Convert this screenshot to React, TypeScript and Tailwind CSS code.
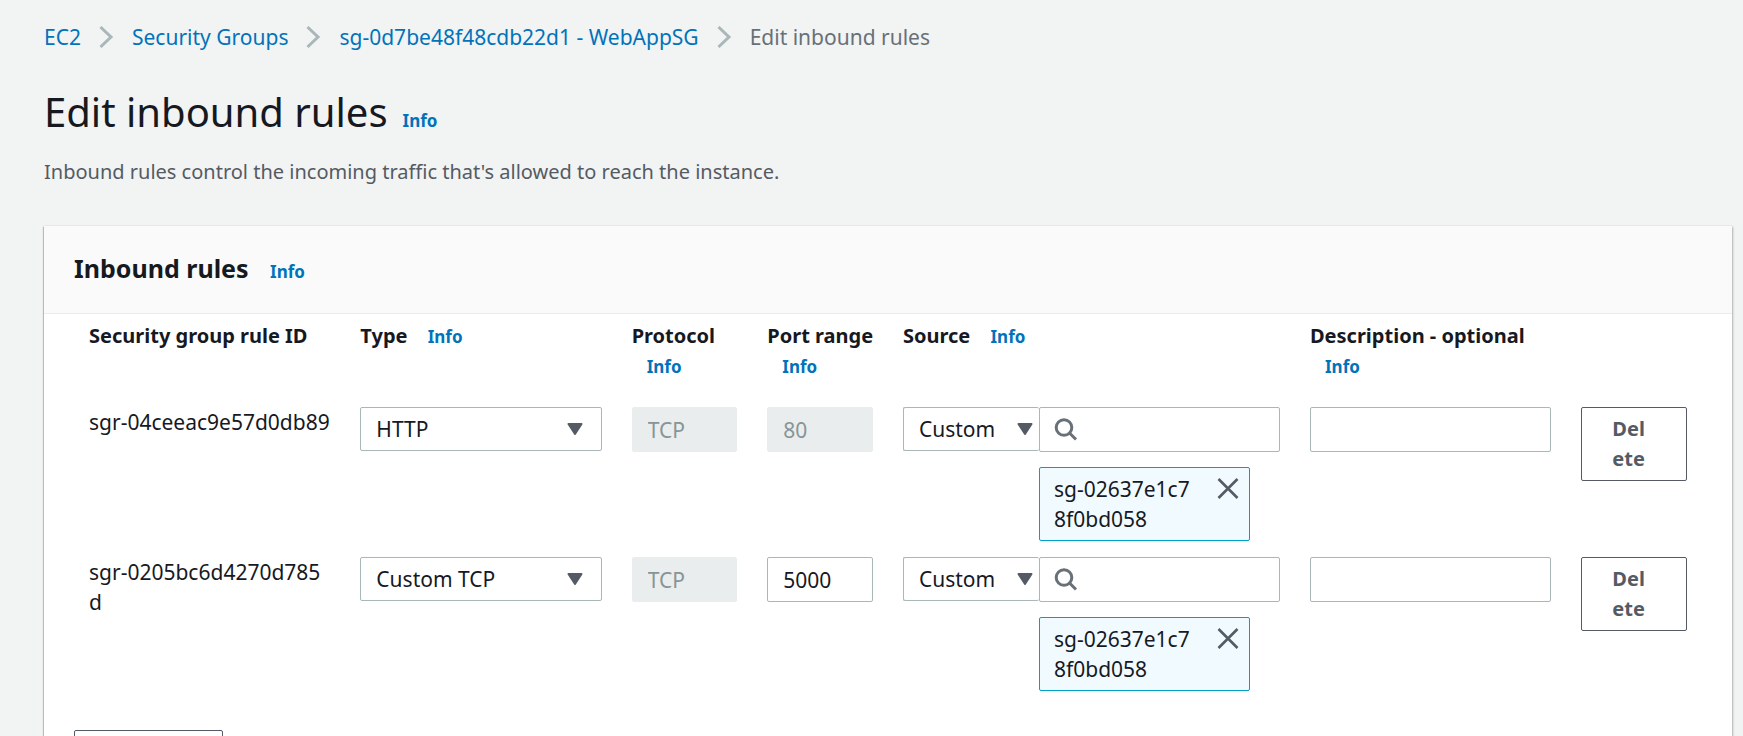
import { useState } from 'react';

type Rule = {
  id: string;
  type: string;
  port: string;
  portLocked: boolean;
  group: string;
};

const rules: Rule[] = [
  {
    id: 'sgr-04ceeac9e57d0db89',
    type: 'HTTP',
    port: '80',
    portLocked: true,
    group: 'sg-02637e1c78f0bd058',
  },
  {
    id: 'sgr-0205bc6d4270d785d',
    type: 'Custom TCP',
    port: '5000',
    portLocked: false,
    group: 'sg-02637e1c78f0bd058',
  },
];

const crumbs = ['EC2', 'Security Groups', 'sg-0d7be48f48cdb22d1 - WebAppSG'];

const columns = [
  { label: 'Security group rule ID', width: 'w-2/12', info: false },
  { label: 'Type', width: 'w-2/12', info: true },
  { label: 'Protocol', width: 'w-1/12', info: true },
  { label: 'Port range', width: 'w-1/12', info: true },
  { label: 'Source', width: 'w-3/12', info: true },
  { label: 'Description - optional', width: 'w-2/12', info: true },
];

export default function App() {
  return (
    <main className="min-h-screen bg-[#f2f3f3] pt-[22px] pr-[11px] pb-8 pl-11 font-['Noto_Sans',sans-serif] text-[21px] leading-[30px] text-[#16191f]">
      <Breadcrumbs />
      <header className="mt-[30px]">
        <h1 className="text-[40px] leading-[60px]">
          Edit inbound rules
          <InfoLink />
        </h1>
        <p className="mt-[15px] text-[20px] text-[#545b64]">
          Inbound rules control the incoming traffic that's allowed to reach the
          instance.
        </p>
      </header>
      <section className="mt-[39px] bg-white shadow-[0_0_1px_0_#00000030,1px_1px_2px_0_#00000040,-1px_1px_1px_0_#00000030]">
        <div className="border-b border-[#eaeded] bg-[#fafafa] px-[30px] pt-[23px] pb-[26px]">
          <h2 className="text-[25px] leading-[38px] font-bold">
            Inbound rules <InfoLink />
          </h2>
        </div>
        <div className="px-[30px] pt-[7px] pb-[30px]">
          <RulesTable />
          <button
            className="mt-[23px] h-[45px] w-[149px] rounded-[2px] border border-[#545b64] text-[20px] font-bold text-[#545b64]"
            type="button"
          >
            Add rule
          </button>
        </div>
      </section>
    </main>
  );
}

function Breadcrumbs() {
  return (
    <nav aria-label="Breadcrumbs">
      <ol className="flex items-center">
        {crumbs.map((crumb) => (
          <li className="flex items-center" key={crumb}>
            <a className="text-[#0073bb]" href="#">
              {crumb}
            </a>
            <svg
              aria-hidden="true"
              className="mx-[18px] h-6 w-[15px] text-[#aab7b8]"
              fill="none"
              stroke="currentColor"
              strokeWidth="3"
              viewBox="0 0 15 24"
            >
              <path d="M1.5 2 12 12 1.5 22" />
            </svg>
          </li>
        ))}
        <li className="text-[#687078]">Edit inbound rules</li>
      </ol>
    </nav>
  );
}

function InfoLink() {
  return (
    <a
      className="ml-[15px] inline-block text-[17px] leading-[20px] font-bold text-[#0073bb]"
      href="#"
    >
      Info
    </a>
  );
}

function RulesTable() {
  return (
    <table className="w-full table-fixed">
      <thead>
        <tr>
          {columns.map(({ label, width, info }) => (
            <th
              className={`px-[15px] pb-[26px] text-left align-top text-[20px] font-bold ${width}`}
              key={label}
              scope="col"
            >
              <span className="whitespace-nowrap">{label}</span>{' '}
              {info ? <InfoLink /> : null}
            </th>
          ))}
          <td className="w-1/12" />
        </tr>
      </thead>
      <tbody>
        {rules.map((rule) => (
          <RuleRow key={rule.id} rule={rule} />
        ))}
      </tbody>
    </table>
  );
}

function RuleRow({ rule }: { rule: Rule }) {
  const [port, setPort] = useState(rule.port);
  const cell = 'px-[15px] pb-4 align-top';

  return (
    <tr>
      <td className={`${cell} break-all`}>{rule.id}</td>
      <td className={cell}>
        <Select label="Type" value={rule.type} />
      </td>
      <td className={cell}>
        <TextField disabled label="Protocol" value="TCP" />
      </td>
      <td className={cell}>
        <TextField
          disabled={rule.portLocked}
          label="Port range"
          onChange={setPort}
          value={port}
        />
      </td>
      <td className={cell}>
        <div className="grid grid-cols-[136px_1fr] items-start">
          <Select joined label="Source type" value="Custom" />
          <div>
            <div className="relative">
              <SearchIcon />
              <input
                aria-label="Source"
                className="block h-[45px] w-full rounded-[2px] border border-[#aab7b8] bg-white pr-4 pl-12"
                type="search"
              />
            </div>
            <div className="mt-[15px] mr-[30px] flex items-start rounded-[2px] border border-[#00a1c9] bg-[#f1faff] py-[6px] pr-[6px] pl-[14px]">
              <span className="w-[138px] break-all">{rule.group}</span>
              <button
                aria-label={`Remove ${rule.group}`}
                className="ml-auto text-[#545b64]"
                type="button"
              >
                <CloseIcon />
              </button>
            </div>
          </div>
        </div>
      </td>
      <td className={cell}>
        <TextField label="Description" />
      </td>
      <td className={cell}>
        <button
          className="block w-full rounded-[2px] border border-[#545b64] bg-white px-[30px] py-[6px] text-left text-[20px] font-bold break-all text-[#545b64]"
          type="button"
        >
          Delete
        </button>
      </td>
    </tr>
  );
}

function SearchIcon() {
  return (
    <svg
      aria-hidden="true"
      className="absolute top-[10px] left-[15px] size-6 text-[#687078]"
      fill="none"
      stroke="currentColor"
      strokeWidth="3"
      viewBox="0 0 24 24"
    >
      <circle cx="10" cy="10.5" r="7.8" />
      <path d="m15.5 16 6.5 6.5" />
    </svg>
  );
}

function CloseIcon() {
  return (
    <svg
      aria-hidden="true"
      className="size-[30px]"
      fill="none"
      stroke="currentColor"
      strokeWidth="2.6"
      viewBox="0 0 30 30"
    >
      <path d="m5.5 5 19 19M24.5 5l-19 19" />
    </svg>
  );
}

function Select({
  joined = false,
  label,
  value,
}: {
  joined?: boolean;
  label: string;
  value: string;
}) {
  return (
    <div className="relative">
      <select
        aria-label={label}
        className={`block h-11 w-full appearance-none rounded-[2px] border border-[#aab7b8] bg-white pl-[15px] ${joined ? 'border-r-0' : ''}`}
        defaultValue={value}
      >
        <option>{value}</option>
      </select>
      <svg
        aria-hidden="true"
        className={`pointer-events-none absolute top-4 h-3 w-4 fill-[#545b64] stroke-[#545b64] ${joined ? 'right-[6px]' : 'right-[19px]'}`}
        strokeLinejoin="round"
        strokeWidth="2"
        viewBox="0 0 16 12"
      >
        <path d="M1.5 1h13L8 11z" />
      </svg>
    </div>
  );
}

function TextField({
  disabled = false,
  label,
  onChange,
  value,
}: {
  disabled?: boolean;
  label: string;
  onChange?: (value: string) => void;
  value?: string;
}) {
  return (
    <input
      aria-label={label}
      className="block h-[45px] w-full rounded-[2px] border border-[#aab7b8] bg-white px-[15px] disabled:border-[#eaeded] disabled:bg-[#eaeded] disabled:text-[#879596]"
      disabled={disabled}
      onChange={(event) => onChange?.(event.target.value)}
      type="text"
      value={value}
    />
  );
}
